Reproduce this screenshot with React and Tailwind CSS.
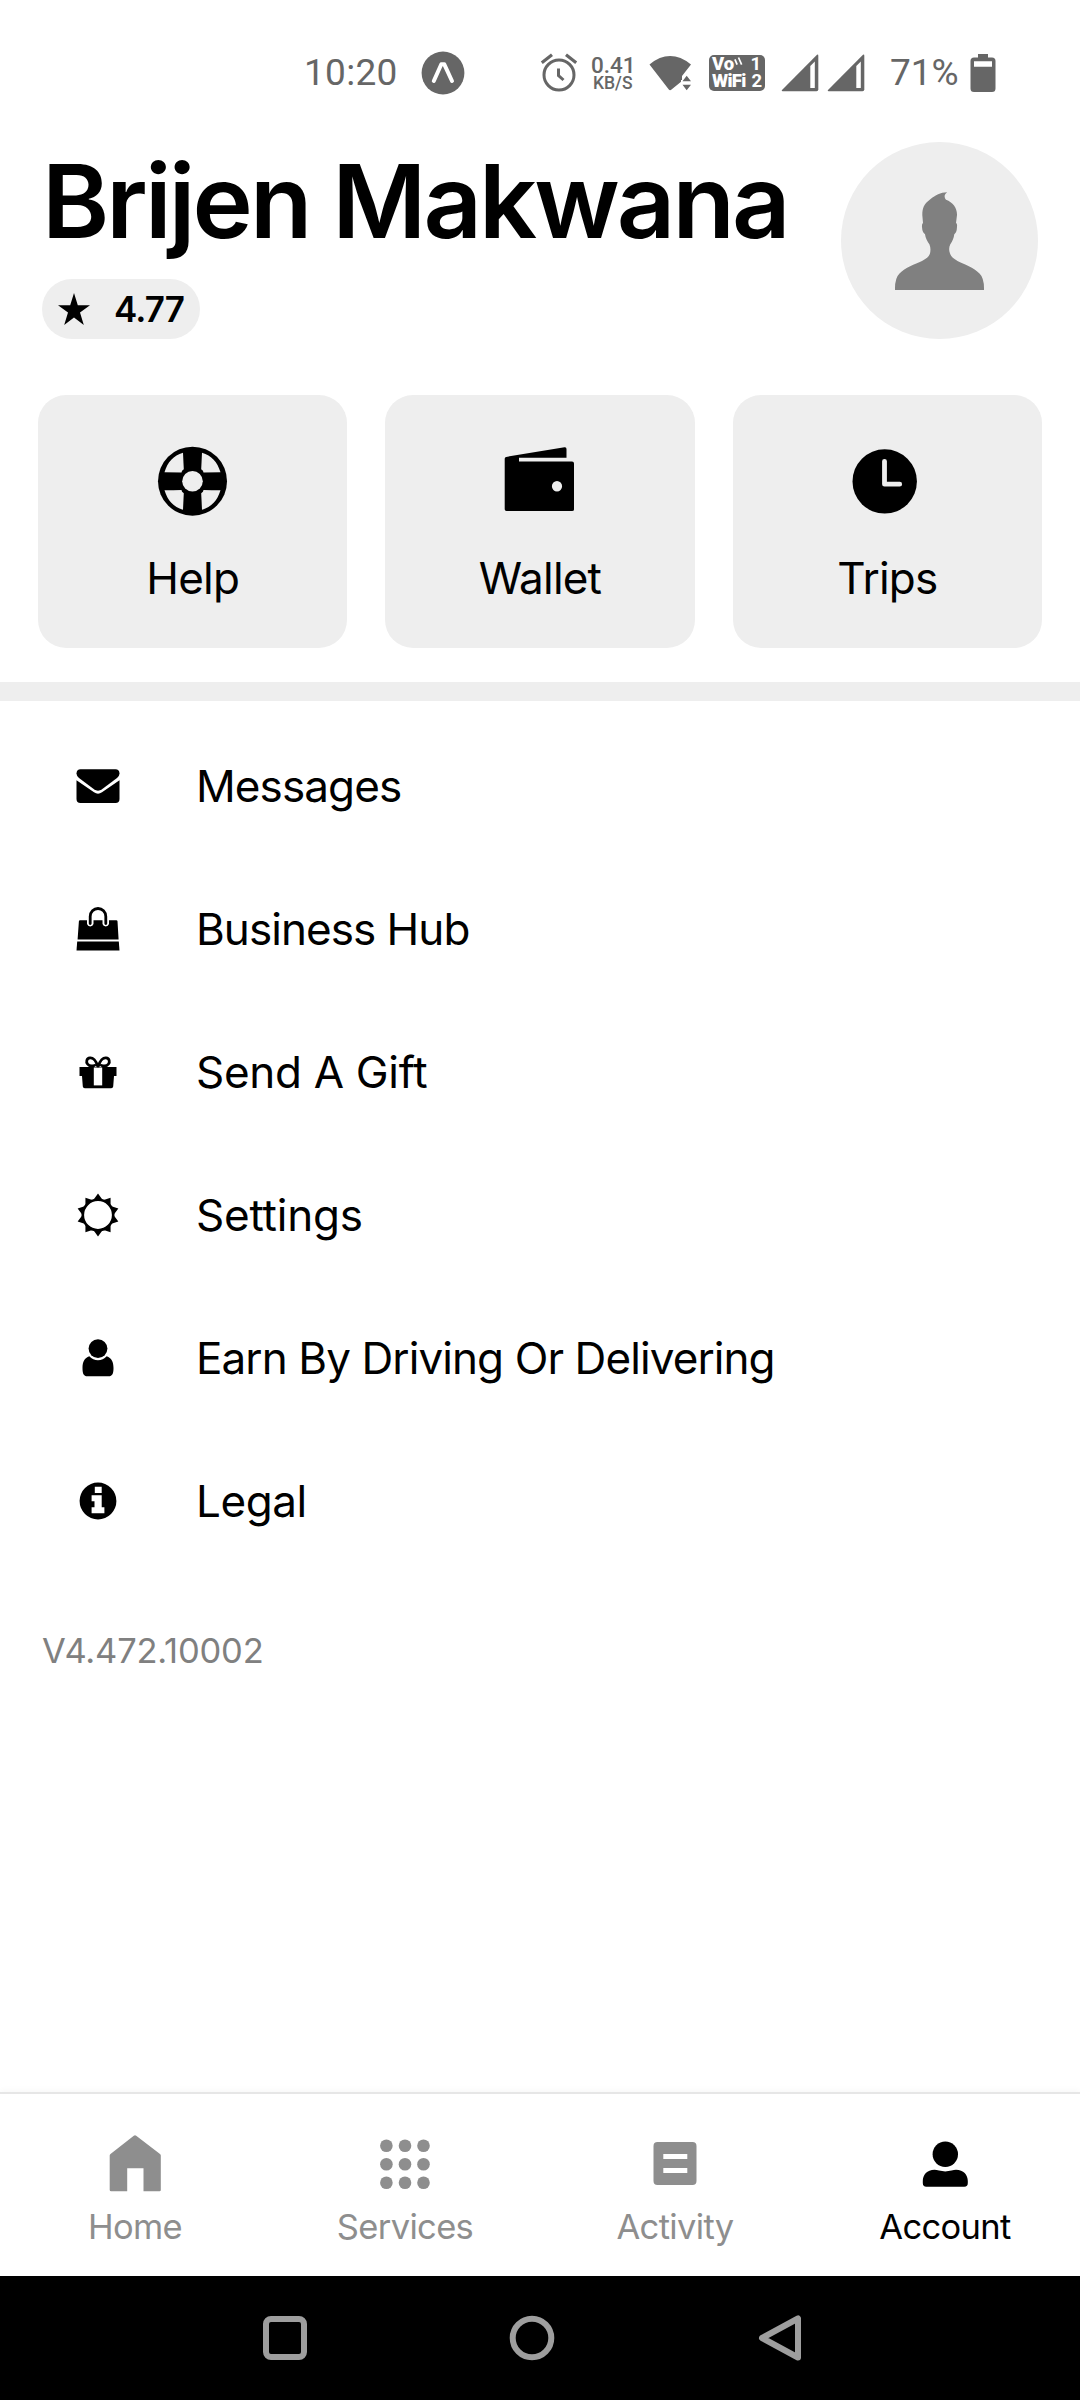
import React from "react";

const HelpIcon = () => (
  <svg viewBox="0 0 72 72" className="h-[72px] w-[72px]">
    <circle cx="35.5" cy="36.2" r="34.5" fill="#000" />
    <g fill="#eee" transform="translate(-0.5 0.2)">
      <circle cx="36" cy="36" r="10.3" />
      <path d="M26.5 7.5 Q27 18 27.3 24 Q25 25.5 25 27.3 Q17 27 8 27 C11 17 17 10 26.5 7.5Z" />
      <path d="M45.5 7.5 Q45 18 44.7 24 Q47 25.5 47 27.3 Q55 27 64 27 C61 17 55 10 45.5 7.5Z" />
      <path d="M26.5 64.5 Q27 54 27.3 48 Q25 46.5 25 44.7 Q17 45 8 45 C11 55 17 62 26.5 64.5Z" />
      <path d="M45.5 64.5 Q45 54 44.7 48 Q47 46.5 47 44.7 Q55 45 64 45 C61 55 55 62 45.5 64.5Z" />
    </g>
  </svg>
);

const WalletIcon = () => (
  <svg viewBox="0 0 72 72" className="h-[72px] w-[72px]">
    <path
      fillRule="evenodd"
      d="M.7 13.7Q.7 12.200 2.300 11.900L60.500 2.300Q62.500 2 62.500 4V12.800H15V16.600H68Q70 16.600 70 18.400V64.400Q70 66 68 66H2.500Q.7 66 .7 64.200ZM53 36a5.100 5.300 0 1 0 0 10.600a5.100 5.300 0 1 0 0-10.600Z"
    />
  </svg>
);

const ClockIcon = () => (
  <svg viewBox="0 0 72 72" className="h-[72px] w-[72px]">
    <circle cx="33.7" cy="36.4" r="32.2" />
    <path d="M33.5 16.3V39.2H48.7" fill="none" stroke="#eee" strokeWidth="4.8" strokeLinecap="round" strokeLinejoin="round" />
  </svg>
);

const MailIcon = () => (
  <svg viewBox="0 0 44 44" className="h-11 w-11">
    <path d="M.5 9.5Q.8 5.3 4.5 5.3H39.5Q43.2 5.3 43.5 9.5Q43.500 12 41 14L26 25.3Q22 28.2 18 25.3L3 14Q.5 12 .5 9.5Z" />
    <path d="M.5 16.3L18 28.3Q22 31 26 28.3L43.5 16.3V35Q43.5 39 39.5 39H4.5Q.5 39 .5 35Z" />
  </svg>
);

const BagIcon = () => (
  <svg viewBox="0 0 44 44" className="h-11 w-11">
    <path d="M4 13.3H11V17A3.4 3.4 0 0 0 17.5 17V13.3H26.5V17A3.4 3.4 0 0 0 33 17V13.3H40.3Q41.4 13.3 41.5 14.3L42.6 32.4H1.6L2.9 14.3Q3 13.3 4 13.3Z" />
    <path d="M1.2 34.6H42.8L43.5 43.4H.5Z" />
    <path d="M14.2 16.5V9.5A7.8 8 0 0 1 29.8 9.5V16.5" fill="none" stroke="#000" strokeWidth="2.8" strokeLinecap="round" />
  </svg>
);

const GiftIcon = () => (
  <svg viewBox="0 0 44 44" className="h-11 w-11">
    <path d="M3.5 17H40.5V26H38L37.2 36.5Q37 38.3 35.2 38.3H8.800Q7 38.3 6.8 36.5L6 26H3.5Z" />
    <path d="M17.8 17.5H26.2V35.4H17.8Z" fill="#fff" />
    <path
      d="M21.5 16C20 10.500 16.800 7.600 14 7.900C10.400 8.300 10 12 11.500 14C12.800 15.800 15.500 16.500 18.500 15.500M22.500 16C24 10.500 27.200 7.600 30 7.900C33.600 8.300 34 12 32.500 14C31.200 15.800 28.500 16.500 25.500 15.500"
      fill="none"
      stroke="#000"
      strokeWidth="2.8"
      strokeLinecap="round"
    />
  </svg>
);

const SettingsIcon = () => (
  <svg viewBox="0 0 44 44" className="h-11 w-11">
    {[0, 36, 72, 108, 144, 180, 216, 252, 288, 324].map((angle) => (
      <path key={angle} d="M22 .6L27.2 7.8Q22 6.500 16.8 7.8Z" transform={`rotate(${angle} 22 22)`} />
    ))}
    <circle cx="22" cy="22" r="15.2" fill="none" stroke="#000" strokeWidth="2.6" />
  </svg>
);

const DriverIcon = () => (
  <svg viewBox="0 0 44 44" className="h-11 w-11">
    <ellipse cx="22" cy="12.600" rx="9.4" ry="9.4" />
    <path d="M13.3 20.3Q17 24.3 22 24.3T30.7 20.3C35.5 22 37.500 26 37.500 32C37.500 37.500 36.500 40.300 32.500 40.300H11.500C7.500 40.300 6.500 37.500 6.500 32C6.500 26 8.500 22 13.300 20.300Z" />
  </svg>
);

const InfoIcon = () => (
  <svg viewBox="0 0 44 44" className="h-11 w-11">
    <circle cx="22" cy="22" r="18.4" />
    <path d="M18.8 7.7H25.7V14H18.8ZM15.6 16.3H25.7V28.3H28.4V34.3H15.6V28.3H18.5V22.2H15.6Z" fill="#fff" />
  </svg>
);

const HomeIcon = () => (
  <svg viewBox="0 0 60 60" className="h-[60px] w-[60px]">
    <path d="M30 1.2Q30.6 1.2 31.2 1.8L55 20Q55.8 20.5 55.8 21.500V56Q55.8 57.3 54.5 57.3H38.5V34.3H22.2V57.3H6.200Q4.700 57.3 4.700 56V21.500Q4.700 20.500 5.500 20L28.800 1.800Q29.400 1.200 30 1.200Z" />
  </svg>
);

const ServicesIcon = () => (
  <svg viewBox="0 0 60 60" className="h-[60px] w-[60px]">
    {[11.7, 30.2, 48.8].map((cy) =>
      [11.4, 30, 48.5].map((cx) => <circle key={`${cx}-${cy}`} cx={cx} cy={cy} r="6.3" />)
    )}
  </svg>
);

const ActivityIcon = () => (
  <svg viewBox="0 0 60 60" className="h-[60px] w-[60px]">
    <path fillRule="evenodd" d="M12.5 8H47.5Q51.5 8 51.5 12V47Q51.5 51 47.5 51H12.5Q8.5 51 8.5 47V12Q8.5 8 12.5 8ZM18.3 20V25H42.3V20ZM18.3 34V39H42.3V34Z" />
  </svg>
);

const AccountIcon = () => (
  <svg viewBox="0 0 60 60" className="h-[60px] w-[60px]">
    <circle cx="30.3" cy="20.3" r="12.7" />
    <path d="M19.5 35.8Q21.5 35.8 24 36.6Q30.3 38.2 36.5 36.6Q39 35.8 41 35.8C48.5 35.8 52.8 41 52.8 47V49Q52.8 52.8 49.3 52.8H11.3Q7.8 52.8 7.8 49V47C7.8 41 12 35.8 19.5 35.8Z" />
  </svg>
);

const cards = [
  { label: "Help", icon: HelpIcon },
  { label: "Wallet", icon: WalletIcon },
  { label: "Trips", icon: ClockIcon },
];

const menu = [
  { label: "Messages", icon: MailIcon, tracking: "tracking-[-0.9px]" },
  { label: "Business Hub", icon: BagIcon, tracking: "tracking-[-0.95px]" },
  { label: "Send A Gift", icon: GiftIcon, tracking: "tracking-[-0.3px]" },
  { label: "Settings", icon: SettingsIcon, tracking: "tracking-[-0.2px]" },
  { label: "Earn By Driving Or Delivering", icon: DriverIcon, tracking: "tracking-[-0.9px]" },
  { label: "Legal", icon: InfoIcon, tracking: "tracking-[-0.4px]" },
];

const tabs = [
  { label: "Home", icon: HomeIcon },
  { label: "Services", icon: ServicesIcon },
  { label: "Activity", icon: ActivityIcon },
  { label: "Account", icon: AccountIcon, active: true },
];

function SignalIcon() {
  return (
    <svg viewBox="0 0 38 38" className="h-[38px] w-[38px]">
      <path d="M36 .8Q37.3 0 37.3 1.8V35.5Q37.3 37.3 35.5 37.3H1.8Q0 37.3 1 36Z" />
      <path d="M29.3 12L33.8 7.5V34H29.3Z" fill="#fff" />
    </svg>
  );
}

function StatusBar() {
  return (
    <div className="flex h-[142px] items-center fill-[#666] pt-[3px] pl-[304px] font-[Roboto,sans-serif] text-[#666]">
      <span className="w-[117px] text-[37px] leading-[40px] tracking-[0.3px]">10:20</span>
      <svg viewBox="0 0 44 44" className="h-11 w-11">
        <circle cx="22" cy="22" r="21.4" />
        <path d="M12.8 30L20.3 13.3H23.3L31 30" fill="none" stroke="#fff" strokeWidth="4" strokeLinejoin="round" strokeLinecap="round" />
      </svg>
      <svg viewBox="0 0 38 40" className="ml-[75px] h-10 w-[38px]">
        <g fill="none" stroke="#666" strokeWidth="3">
          <circle cx="19" cy="22" r="15" />
          <path d="M1.8 9.8L12 1.8M36.2 9.8L26 1.8" strokeWidth="3.2" />
          <path d="M18.5 15.5V22.5L23.5 27" />
        </g>
      </svg>
      <div className="ml-[13px] flex w-[58px] flex-col items-start">
        <span className="h-[19px] text-[22.5px] leading-[20px] font-medium">0.41</span>
        <span className="mt-px h-[16px] pl-[2px] text-[17.5px] leading-[16px] font-medium">KB/S</span>
      </div>
      <svg viewBox="0 0 44 36" className="h-9 w-11">
        <path d="M.5 9.5Q21 -7.3 42 9.5L33 21V26L22.5 34.6Q21 36 19.8 34.6Z" />
        <path d="M32 25H44V29H32Z" fill="#fff" />
        <path d="M33.5 26.3L37.7 20.8L42 26.3ZM33.5 29.8L37.7 35.3L42 29.8Z" />
      </svg>
      {/* VoWiFi badge */}
      <div className="ml-[16px] flex h-[36px] w-[56px] flex-col justify-center rounded-[5px] bg-[#666] px-[3px] text-[18.5px] text-white">
        <div className="flex h-[17px] items-center justify-between pr-px leading-[17px]">
          <span className="flex font-black">
            Vo
            <svg viewBox="0 0 10 12" className="h-3 w-[9px]">
              <path d="M1 3L3.5 9M5 1L8.500 9" fill="none" stroke="#fff" strokeWidth="1.9" />
            </svg>
          </span>
          <span className="font-bold">1</span>
        </div>
        <div className="flex h-[17px] items-center justify-between leading-[17px]">
          <span className="tracking-[-0.7px] font-black">WiFi</span>
          <span className="font-bold">2</span>
        </div>
      </div>
      <div className="ml-[16px] flex gap-[8px]">
        <SignalIcon />
        <SignalIcon />
      </div>
      <span className="ml-[25px] w-[80px] text-[37px] leading-[40px]">71%</span>
      <svg viewBox="0 0 26 38" className="h-[38px] w-[26px]">
        <path
          fillRule="evenodd"
          d="M8 0H18V3.5H22Q25.5 3.5 25.5 7V34.5Q25.5 38 22 38H4Q.5 38 .5 34.5V7Q.5 3.5 4 3.5H8ZM4 7.3V12.7H22V7.3Z"
        />
      </svg>
    </div>
  );
}

export default function App() {
  return (
    <div className="flex h-[2400px] w-[1080px] flex-col overflow-hidden bg-white font-[Inter,sans-serif] text-black">
      <StatusBar />

      {/* Profile */}
      <header className="flex h-[197px] justify-between pr-[42px] pl-[42px]">
        <div>
          <h1 className="h-[118px] text-[102px] leading-[118px] font-semibold tracking-[-2.9px] whitespace-nowrap">
            Brijen Makwana
          </h1>
          <div className="mt-[19px] flex h-[60px] w-[158px] items-center rounded-full bg-[#eee] pl-[16px]">
            <svg viewBox="0 0 32 32" className="h-8 w-8">
              <path d="M16 0L19.8 12.2H32L22 19.5L25.8 32L16 24.5L6.2 32L10 19.5L0 12.2H12.2Z" />
            </svg>
            <span className="ml-[24px] text-[35px] leading-[40px] font-semibold tracking-[-0.9px]">4.77</span>
          </div>
        </div>
        <div className="flex h-[197px] w-[197px] items-center justify-center rounded-full bg-[#eee]">
          <svg viewBox="0 0 120 120" className="h-[120px] w-[120px]" fill="#808080">
            <path d="M67.200 11.300C64 13.500 64 16.500 66 18.800C73 21.500 77.200 27 77 34L76 42Q77.400 42.500 77 46Q76.800 51.500 74.300 53.200C73.800 57 72.500 60 70.200 63.500C69 66 68.700 69 70 72.500C71 75.500 73.500 77.500 77.500 80C84 83.300 94 86.500 99.500 92.500Q104.300 97 104 109H15Q14.700 97 19.500 92.500C25 86.500 35 83.300 42 80C46.500 77.500 49 75.500 50 72.500C50.800 69 50.500 66 49.500 63.500C47.200 60 45.500 57 45 53.200Q42.300 51.500 42 46Q41.700 42.500 43 42L42.300 34C42.300 27 44 23 50 18.500C56 14 60 11.500 67.200 11.300Z" />
          </svg>
        </div>
      </header>

      {/* Quick actions */}
      <section className="mt-[56px] grid grid-cols-3 gap-[38px] px-[38px]">
        {cards.map((card) => (
          <div key={card.label} className="flex h-[253px] flex-col items-center rounded-[28px] bg-[#eee] pt-[50px]">
            <card.icon />
            <span className="mt-[31px] text-[44px] leading-[60px] tracking-[-0.8px]">{card.label}</span>
          </div>
        ))}
      </section>

      <div className="mt-[34px] h-[19px] shrink-0 bg-[#eee]" />

      {/* Menu */}
      <ul className="pt-[13px]">
        {menu.map((item) => (
          <li key={item.label} className="flex h-[143px] items-center pl-[76px]">
            <item.icon />
            <span className={`ml-[76px] text-[44px] leading-[60px] whitespace-nowrap ${item.tracking}`}>{item.label}</span>
          </li>
        ))}
      </ul>

      <p className="mt-[49px] pl-[42px] text-[34.5px] leading-[60px] tracking-[-0.2px] text-[#808080]">V4.472.10002</p>

      {/* Bottom tabs */}
      <nav className="mt-auto grid h-[184px] shrink-0 grid-cols-4 border-t-2 border-[#e6e6e6] shadow-[0_-2px_6px_rgba(0,0,0,0.03)]">
        {tabs.map((tab) => (
          <div
            key={tab.label}
            className={
              tab.active
                ? "flex flex-col items-center fill-black pt-[40px] text-black"
                : "flex flex-col items-center fill-[#8e8e8e] pt-[40px] text-[#8e8e8e]"
            }
          >
            <tab.icon />
            <span className="mt-[13px] text-[34.5px] leading-[40px] tracking-[-0.65px]">{tab.label}</span>
          </div>
        ))}
      </nav>

      {/* System navigation */}
      <div className="flex h-[124px] shrink-0 items-center bg-black pl-[262px]">
        <svg viewBox="0 0 46 46" className="h-[46px] w-[46px]">
          <rect x="4" y="4" width="38" height="38" rx="5" fill="none" stroke="#9e9e9e" strokeWidth="6" />
        </svg>
        <svg viewBox="0 0 46 46" className="ml-[201px] h-[46px] w-[46px]">
          <circle cx="23" cy="23" r="19.3" fill="none" stroke="#9e9e9e" strokeWidth="6" />
        </svg>
        <svg viewBox="0 0 46 46" className="ml-[202px] h-[46px] w-[46px]">
          <path d="M5 23L41 3.5V42.5Z" fill="none" stroke="#9e9e9e" strokeWidth="6" strokeLinejoin="round" />
        </svg>
      </div>
    </div>
  );
}
